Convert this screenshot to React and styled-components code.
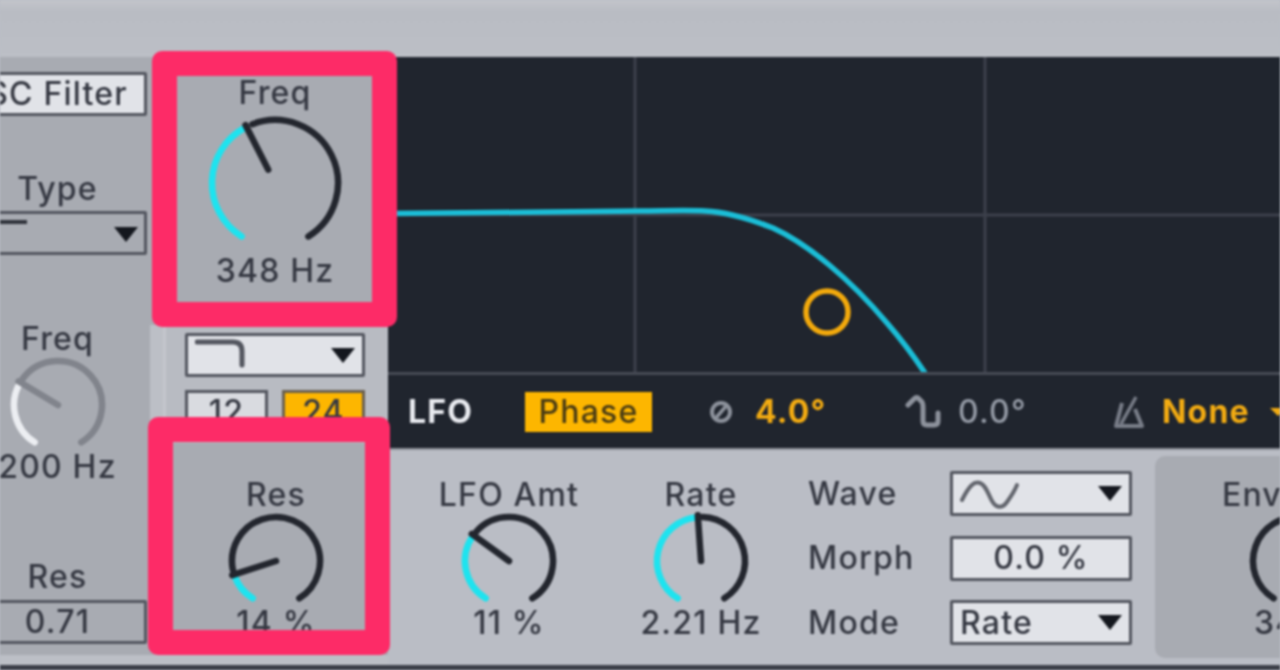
import React from "react";
import styled, { createGlobalStyle } from "styled-components";

const FONT = `"Inter", "Open Sans", "Liberation Sans", sans-serif`;
const INK = "#353842";
const PANEL = "#a8abb2";
const LIGHT = "#babdc5";
const DARK = "#20252e";
const AMBER = "#fdb600";
const CYAN = "#1ee3ef";

const Global = createGlobalStyle`
  html, body { margin: 0; padding: 0; background: ${LIGHT}; }
  body { width: 1280px; height: 670px; overflow: hidden; font-family: ${FONT}; }
`;

const Page = styled.div`
  position: relative;
  width: 1280px;
  height: 670px;
  overflow: hidden;
  display: flex;
  flex-direction: column;
  background: #bcbfc6;
  color: ${INK};
  font-size: 32px;
  line-height: 38px;
  font-weight: 500;
  letter-spacing: 1.2px;
  filter: blur(1.1px);
`;

const TopBar = styled.div`
  height: 57px;
  flex: none;
  background: linear-gradient(#c3c5cb, #b9bcc3 20%, #bcbfc6);
`;

const Body = styled.div`
  flex: 1;
  min-height: 0;
  display: flex;
`;

const Footer = styled.div`
  height: 5px;
  flex: none;
  background: #3b3e48;
`;

const LeftCol = styled.div`
  width: 150px;
  height: 598px;
  flex: none;
  overflow: hidden;
  background: ${PANEL};
`;

const LeftInner = styled.div`
  width: 179px;
  margin-left: -32px;
  padding-top: 15px;
  display: flex;
  flex-direction: column;
  align-items: stretch;
`;

const Label = styled.div`
  height: 36px;
  line-height: 38px;
  margin-top: ${(p) => p.$mt ?? 0}px;
  text-align: center;
  white-space: nowrap;
  flex: none;
`;

const Field = styled.div`
  position: relative;
  height: ${(p) => p.$h ?? 45}px;
  margin-top: ${(p) => p.$mt ?? 0}px;
  box-sizing: border-box;
  border: 3px solid #53565f;
  border-radius: 2px;
  background: ${(p) => (p.$flat ? PANEL : "#e1e3e8")};
  display: flex;
  align-items: center;
  justify-content: ${(p) => (p.$start ? "space-between" : "center")};
  padding: ${(p) => (p.$start ? "0 7px" : "0")};
  white-space: nowrap;
  flex: none;
  width: ${(p) => (p.$w ? `${p.$w}px` : "auto")};
`;

const Arrow = styled.span`
  width: 0;
  height: 0;
  flex: none;
  border-left: 12px solid transparent;
  border-right: 12px solid transparent;
  border-top: 15px solid #14171e;
`;

const ArrowRight = styled(Arrow)`
  position: absolute;
  right: 6px;
  top: 13px;
`;

const KnobUnit = styled.div`
  display: flex;
  flex-direction: column;
  align-items: center;
  flex: none;
  width: ${(p) => p.$w ?? 140}px;
  margin-left: ${(p) => p.$ml ?? 0}px;
  margin-top: ${(p) => p.$mt ?? 0}px;
`;

const KnobSvg = styled.svg`
  display: block;
  flex: none;
  align-self: center;
`;

const FilterCol = styled.div`
  width: 238px;
  flex: none;
  display: flex;
  flex-direction: column;
`;

const FreqSection = styled.div`
  height: 268px;
  flex: none;
  background: ${PANEL};
  box-sizing: border-box;
  padding: 17px 0 0 12px;
  display: flex;
  justify-content: center;
`;

const Strip = styled.div`
  height: 118px;
  flex: none;
  box-sizing: border-box;
  margin-left: 13px;
  background: #b8bbc2;
  border-left: 3px solid #c4c6cc;
  padding: 8px 0 0 19px;
`;

const StripRow = styled.div`
  display: flex;
  gap: 14px;
  margin-top: 13px;
`;

const ToggleButton = styled.div`
  width: 83px;
  height: 44px;
  box-sizing: border-box;
  border: 3px solid ${(p) => (p.$on ? "#6a6050" : "#53565f")};
  background: ${(p) => (p.$on ? AMBER : "#d9dbe0")};
  display: flex;
  align-items: center;
  justify-content: center;
`;

const ResSection = styled.div`
  height: 212px;
  flex: none;
  background: ${PANEL};
  box-sizing: border-box;
  padding: 33px 0 0 14px;
  display: flex;
  justify-content: center;
`;

const RightCol = styled.div`
  flex: 1;
  min-width: 0;
  display: flex;
  flex-direction: column;
`;

const Graph = styled.svg`
  display: block;
  flex: none;
  width: 892px;
  height: 315px;
  background: ${DARK};
`;

const LfoBar = styled.div`
  height: 76px;
  flex: none;
  box-sizing: border-box;
  background: ${DARK};
  border-top: 3px solid #464a54;
  padding-left: 20px;
  display: grid;
  grid-template-columns: 117px 183px 47px 150px 53px 155px 49px 108px 1fr;
  align-items: center;
  overflow: hidden;
`;

const LfoTitle = styled.span`
  color: #e9ebf0;
  font-weight: 700;
`;

const PhaseTag = styled.span`
  width: 127px;
  height: 40px;
  background: ${AMBER};
  color: #4a3c14;
  display: flex;
  align-items: center;
  justify-content: center;
`;

const LfoValue = styled.span`
  color: ${(p) => (p.$on ? "#f2ab12" : "#949aa5")};
  font-weight: ${(p) => (p.$on ? 700 : 500)};
  white-space: nowrap;
`;

const AmberArrow = styled.span`
  width: 0;
  height: 0;
  border-left: 8px solid transparent;
  border-right: 8px solid transparent;
  border-top: 8px solid #f2ab12;
`;

const BottomPanel = styled.div`
  flex: 1;
  min-height: 0;
  display: flex;
  box-sizing: border-box;
  border-top: 2px solid #8e9199;
  background: ${LIGHT};
  overflow: hidden;
`;

const KnobArea = styled.div`
  display: flex;
  gap: 52px;
  padding: 26px 0 0 51px;
  flex: none;
`;

const RowLabels = styled.div`
  display: grid;
  grid-auto-rows: 45px;
  row-gap: 19.5px;
  width: 142px;
  margin-left: 37px;
  padding-top: 21px;
  flex: none;
`;

const RowLabel = styled.div`
  display: flex;
  align-items: center;
`;

const FieldCol = styled.div`
  display: grid;
  grid-auto-rows: 45px;
  row-gap: 19.5px;
  width: 182px;
  padding-top: 21px;
  flex: none;
`;

const EnvPanel = styled.div`
  flex: 1;
  min-width: 0;
  margin: 6px 0 7px 23px;
  border-radius: 10px 0 0 10px;
  background: ${PANEL};
  overflow: hidden;
  padding-top: 20px;
`;

const Highlight = styled.div`
  position: absolute;
  left: ${(p) => p.$x}px;
  top: ${(p) => p.$y}px;
  width: ${(p) => p.$w}px;
  height: ${(p) => p.$h}px;
  box-sizing: border-box;
  border: 25px solid #fd2b67;
  border-radius: 10px;
  pointer-events: none;
`;

function polar(cx, cy, r, deg) {
  const a = (deg * Math.PI) / 180;
  return [cx + r * Math.sin(a), cy - r * Math.cos(a)];
}

function arc(cx, cy, r, from, to) {
  const [x1, y1] = polar(cx, cy, r, from);
  const [x2, y2] = polar(cx, cy, r, to);
  const large = to - from > 180 ? 1 : 0;
  return `M${x1.toFixed(2)} ${y1.toFixed(2)}A${r} ${r} 0 ${large} 1 ${x2.toFixed(2)} ${y2.toFixed(2)}`;
}

function Knob({ w, h, cy, r, angle, inner = 0, start = -148, end = 148, track = "#23262e", fill = CYAN, sw = 6.5, gap = 6 }) {
  const cx = w / 2;
  const [tx, ty] = polar(cx, cy, r + 2, angle);
  const [ix, iy] = polar(cx, cy, inner, angle);
  return (
    <KnobSvg width={w} height={h} viewBox={`0 0 ${w} ${h}`}>
      <path d={arc(cx, cy, r, angle + gap, end)} fill="none" stroke={track} strokeWidth={sw} strokeLinecap="round" />
      <path d={arc(cx, cy, r, start, angle - 1)} fill="none" stroke={fill} strokeWidth={sw} strokeLinecap="round" />
      <line x1={tx} y1={ty} x2={ix} y2={iy} stroke={track} strokeWidth={sw} strokeLinecap="round" />
    </KnobSvg>
  );
}

function FilterShape() {
  return (
    <svg width="60" height="36" viewBox="0 0 60 36" style={{ display: "block" }}>
      <path d="M2 5H38Q47 5 47 14V28" fill="none" stroke="#53565f" strokeWidth="5" strokeLinecap="round" />
    </svg>
  );
}

function SineIcon() {
  return (
    <svg width="60" height="32" viewBox="0 0 60 32" style={{ display: "block" }}>
      <path d="M2 22C9 8 14 3 20 5S28 16 32 23S42 31 47 24S55 12 57 7" fill="none" stroke="#62656d" strokeWidth="4" strokeLinecap="round" />
    </svg>
  );
}

function PhaseIcon() {
  return (
    <svg width="26" height="26" viewBox="0 0 26 26" style={{ display: "block" }}>
      <circle cx="13" cy="13" r="9" fill="none" stroke="#8d929c" strokeWidth="4" />
      <path d="M19 6L7 20" stroke="#8d929c" strokeWidth="3.5" />
    </svg>
  );
}

function OffsetIcon() {
  return (
    <svg width="36" height="34" viewBox="0 0 36 34" style={{ display: "block" }}>
      <path d="M3 10L9 4Q11 2 13 3L17 7Q18 9 18 12V26Q18 30 22 30H29Q33 30 33 26V18" fill="none" stroke="#8d929c" strokeWidth="5" strokeLinejoin="round" strokeLinecap="round" />
    </svg>
  );
}

function MetronomeIcon() {
  return (
    <svg width="32" height="34" viewBox="0 0 32 34" style={{ display: "block" }}>
      <path d="M9 8L3 31H29L22 14" fill="none" stroke="#787d88" strokeWidth="4" strokeLinejoin="round" />
      <path d="M8 29L23 2" stroke="#787d88" strokeWidth="3.5" />
    </svg>
  );
}

export default function App() {
  return (
    <>
      <Global />
      <Page>
        <TopBar />
        <Body>
          <LeftCol>
            <LeftInner>
              <Field $h={44}>SC Filter</Field>
              <Label $mt={54}>Type</Label>
              <Field $h={44} $mt={5} $flat>
                <svg width="40" height="10" viewBox="0 0 40 10" style={{ position: "absolute", left: 18, top: 5 }}>
                  <path d="M0 3H38" stroke="#30333b" strokeWidth="4" />
                </svg>
                <ArrowRight />
              </Field>
              <Label $mt={65}>Freq</Label>
              <Knob w={110} h={90} cy={49} r={44} angle={-59} track="#81848c" fill="#eceef2" />
              <Label $mt={2}>200 Hz</Label>
              <Label $mt={74}>Res</Label>
              <Field $h={44} $mt={6} $flat>0.71</Field>
            </LeftInner>
          </LeftCol>

          <FilterCol>
            <FreqSection>
              <KnobUnit $w={170}>
                <Label>Freq</Label>
                <Knob w={150} h={142} cy={73} r={63} angle={-27} inner={15} />
                <Label>348 Hz</Label>
              </KnobUnit>
            </FreqSection>
            <Strip>
              <Field $h={44} $w={180} $start>
                <FilterShape />
                <Arrow />
              </Field>
              <StripRow>
                <ToggleButton>12</ToggleButton>
                <ToggleButton $on>24</ToggleButton>
              </StripRow>
            </Strip>
            <ResSection>
              <KnobUnit $w={140}>
                <Label>Res</Label>
                <Knob w={110} h={92} cy={49} r={44} angle={-108} />
                <Label>14 %</Label>
              </KnobUnit>
            </ResSection>
          </FilterCol>

          <RightCol>
            <Graph viewBox="0 0 892 315">
              <path d="M247 0V315M597 0V315M0 158H892" stroke="#3c404b" strokeWidth="3" fill="none" />
              <path
                d="M0 156.5C80 156.5 170 154.5 252 154C280 153.8 300 153 317 154C340 155 362 162 385 171C420 187 462 222 499 266C512 281 525 298 537 316"
                fill="none"
                stroke="#1bbdd6"
                strokeWidth="5.5"
              />
              <circle cx="439" cy="255" r="21" fill="none" stroke="#f2a90c" strokeWidth="5.5" />
            </Graph>
            <LfoBar>
              <LfoTitle>LFO</LfoTitle>
              <PhaseTag>Phase</PhaseTag>
              <PhaseIcon />
              <LfoValue $on>4.0°</LfoValue>
              <OffsetIcon />
              <LfoValue>0.0°</LfoValue>
              <MetronomeIcon />
              <LfoValue $on>None</LfoValue>
              <AmberArrow />
            </LfoBar>
            <BottomPanel>
              <KnobArea>
                <KnobUnit>
                  <Label>LFO Amt</Label>
                  <Knob w={110} h={92} cy={49} r={44} angle={-54} />
                  <Label>11 %</Label>
                </KnobUnit>
                <KnobUnit>
                  <Label>Rate</Label>
                  <Knob w={110} h={92} cy={49} r={44} angle={-4} />
                  <Label>2.21 Hz</Label>
                </KnobUnit>
              </KnobArea>
              <RowLabels>
                <RowLabel>Wave</RowLabel>
                <RowLabel>Morph</RowLabel>
                <RowLabel>Mode</RowLabel>
              </RowLabels>
              <FieldCol>
                <Field $start>
                  <SineIcon />
                  <Arrow />
                </Field>
                <Field>0.0 %</Field>
                <Field $start>
                  Rate
                  <Arrow />
                </Field>
              </FieldCol>
              <EnvPanel>
                <KnobUnit $ml={72}>
                  <Label>Envelope</Label>
                  <Knob w={110} h={92} cy={49} r={44} angle={8} fill="#23262e" />
                  <Label>34 %</Label>
                </KnobUnit>
              </EnvPanel>
            </BottomPanel>
          </RightCol>
        </Body>
        <Footer />
        <Highlight $x={152} $y={51} $w={245} $h={276} />
        <Highlight $x={148} $y={417} $w={242} $h={238} />
      </Page>
    </>
  );
}
